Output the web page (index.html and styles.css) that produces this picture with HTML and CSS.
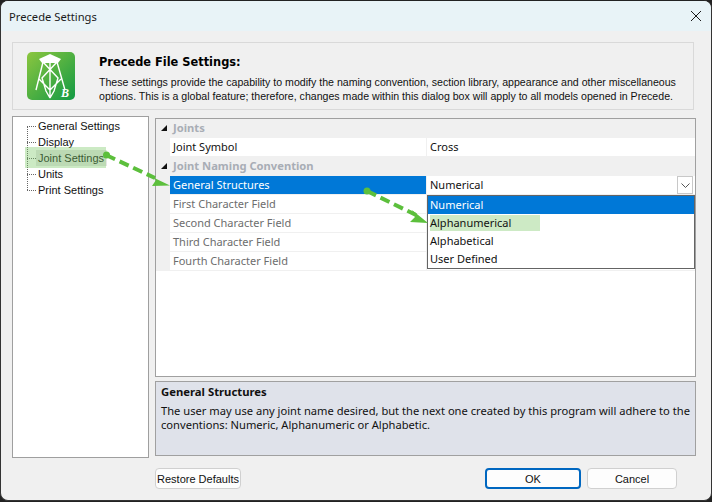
FILE: index.html
```html
<!DOCTYPE html>
<html lang="en">
<head>
<meta charset="utf-8">
<title>Precede Settings</title>
<link rel="stylesheet" href="styles.css">
</head>
<body>
<div class="window">
  <div class="titlebar">
    <span class="title">Precede Settings</span>
    <svg class="close" width="12" height="12" viewBox="0 0 12 12"><path d="M1 1L11 11M11 1L1 11" stroke="#1a1a1a" stroke-width="1" fill="none"/></svg>
  </div>
  <div class="content">
    <div class="header">
      <svg class="logo" width="48" height="48" viewBox="0 0 48 48">
        <defs><linearGradient id="lg" x1="0" y1="0" x2="1" y2="1"><stop offset="0" stop-color="#8cc63f"/><stop offset="1" stop-color="#129a44"/></linearGradient></defs>
        <rect width="48" height="48" rx="5" fill="url(#lg)"/>
        <path d="M12 7L23 2L34 7L31 11H15Z" fill="#fff"/>
        <path d="M16 10L9 38M30 10L38 38M23 10V46M16 10L31 26L27 39L23 46M30 10L15 26L19 39L23 46M12 27L23 38L34 27" stroke="#fff" stroke-width="1.4" fill="none"/>
        <text x="34" y="45" class="logo-b">B</text>
      </svg>
      <div class="header-text">
        <h1 class="heading">Precede File Settings:</h1>
        <p class="desc">These settings provide the capability to modify the naming convention, section library, appearance and other miscellaneous<br>options. This is a global feature; therefore, changes made within this dialog box will apply to all models opened in Precede.</p>
      </div>
    </div>
    <div class="main">
      <ul class="tree">
        <li class="tree-item"><span class="tree-label">General Settings</span></li>
        <li class="tree-item"><span class="tree-label">Display</span></li>
        <li class="tree-item is-selected"><span class="tree-label">Joint Settings</span></li>
        <li class="tree-item"><span class="tree-label">Units</span></li>
        <li class="tree-item"><span class="tree-label">Print Settings</span></li>
      </ul>
      <div class="side">
        <div class="grid">
          <div class="group"><span class="caret"></span>Joints</div>
          <div class="row"><div class="name">Joint Symbol</div><div class="value">Cross</div></div>
          <div class="group"><span class="caret"></span>Joint Naming Convention</div>
          <div class="row row-active"><div class="name">General Structures</div><div class="value">Numerical<span class="combo-btn"><svg width="9" height="5" viewBox="0 0 9 5"><path d="M0.5 0.5L4.5 4.5L8.5 0.5" stroke="#555" fill="none"/></svg></span></div></div>
          <div class="row row-off"><div class="name">First Character Field</div><div class="value"></div></div>
          <div class="row row-off"><div class="name">Second Character Field</div><div class="value"></div></div>
          <div class="row row-off"><div class="name">Third Character Field</div><div class="value"></div></div>
          <div class="row row-off"><div class="name">Fourth Character Field</div><div class="value"></div></div>
          <ul class="dropdown">
            <li class="opt opt-sel">Numerical</li>
            <li class="opt opt-marked"><span class="opt-mark">Alphanumerical</span></li>
            <li class="opt">Alphabetical</li>
            <li class="opt">User Defined</li>
          </ul>
        </div>
        <div class="help">
          <div class="help-title">General Structures</div>
          <p class="help-text">The user may use any joint name desired, but the next one created by this program will adhere to the<br>conventions: Numeric, Alphanumeric or Alphabetic.</p>
        </div>
      </div>
    </div>
    <div class="footer">
      <button class="btn btn-restore">Restore Defaults</button>
      <div class="footer-right">
        <button class="btn btn-ok">OK</button>
        <button class="btn btn-cancel">Cancel</button>
      </div>
    </div>
  </div>
  <svg class="arrows" width="712" height="502" viewBox="0 0 712 502">
    <circle cx="106.5" cy="155" r="3.5" fill="#5cbf3c"/>
    <path d="M106 155L155 178" stroke="#5cbf3c" stroke-width="4" stroke-dasharray="10 5" fill="none"/>
    <path d="M170 185.500L152 186L156 180L148 175Z" fill="#5cbf3c"/>
    <circle cx="367" cy="191" r="3.500" fill="#5cbf3c"/>
    <path d="M367 191L416 215" stroke="#5cbf3c" stroke-width="4" stroke-dasharray="10 5" fill="none"/>
    <path d="M428 223L410 222L415 217L412 210Z" fill="#5cbf3c"/>
  </svg>
</div>
</body>
</html>
```
FILE: styles.css
```css
* { box-sizing: border-box; }
html, body { margin: 0; padding: 0; }
body { width: 712px; height: 502px; background: #222; overflow: hidden; font-family: "Noto Sans", sans-serif; font-size: 11px; color: #111; }
.window { position: relative; width: 712px; height: 501px; background: #f0f0f0; border-radius: 8px; border: 1px solid #333; border-top-color: #222; overflow: hidden; }
.titlebar { height: 30px; background: #e8f3f7; display: flex; align-items: center; justify-content: space-between; padding: 0 9px 0 8px; }
.title { font-size: 11.2px; color: #1a1a1a; }
.content { padding: 11px 15px 0 11px; }
.header { height: 68px; margin-right: 2px; border: 1px solid #d9d9d9; display: flex; padding: 9px 0 0 14px; gap: 24px; }
.logo { flex: none; }
.logo-b { font: italic bold 12px "Liberation Serif", serif; fill: #fff; }
.heading { margin: 2px 0 5px; font: bold 11.4px/16px "DejaVu Sans", sans-serif; color: #000; }
.desc { margin: 0; font: 10.6px/14px "Liberation Sans", sans-serif; color: #111; white-space: nowrap; }
.main { display: flex; margin-top: 6px; gap: 6px; height: 342px; }
.tree { list-style: none; margin: 0; width: 137px; height: 342px; flex: none; background: #fff; border: 1px solid #9f9f9f; padding: 1px 0 0 14px; position: relative; font-family: "Liberation Sans", sans-serif; }
.tree-item { height: 16px; line-height: 16px; display: flex; align-items: center; position: relative; }
.tree-item::before { content: ""; width: 9px; border-top: 1px dotted #666; flex: none; }
.tree-label { padding-left: 2px; white-space: nowrap; }
.tree::before { content: ""; position: absolute; left: 14px; top: 9px; height: 64px; border-left: 1px dotted #666; }
.tree-item.is-selected::after { content: ""; position: absolute; left: -2px; top: -3px; width: 81px; height: 21px; background: rgba(120, 200, 100, 0.38); }
.tree-item.is-selected .tree-label { background: #e6e6e6; padding-right: 3px; }
.side { width: 541px; display: flex; flex-direction: column; gap: 4px; height: 340px; }
.grid { position: relative; height: 259px; background: #fff; border: 1px solid #a0a0a0; margin-top: 2px; }
.group { height: 19px; background: #f0f0f0; font-weight: 700; font-size: 11.2px; color: #a8adb5; line-height: 18px; padding-left: 17px; position: relative; }
.caret { position: absolute; left: 5px; top: 6px; width: 0; height: 0; border-left: 6px solid transparent; border-bottom: 6px solid #111; }
.row { display: grid; grid-template-columns: 257px 1fr; height: 19px; background: #f0f0f0; padding-left: 14px; }
.name { background: #fff; padding-left: 3px; line-height: 18px; height: 18px; margin-right: 1px; }
.value { background: #fff; padding-left: 3px; line-height: 18px; height: 18px; position: relative; }
.row-active .name { background: #0078d7; color: #fff; }
.row-off .name { color: #6d6d6d; }
.combo-btn { position: absolute; right: 2px; top: 0; width: 16px; height: 18px; border: 1px solid #c8c8c8; display: flex; align-items: center; justify-content: center; }
.dropdown { list-style: none; margin: 0; padding: 0; position: absolute; left: 271px; top: 76px; width: 268px; height: 74px; background: #fff; border: 1px solid #646464; }
.opt { height: 18px; line-height: 18px; padding-left: 2px; }
.opt-sel { background: #0078d7; color: #fff; }
.opt-marked { padding-top: 1px; }
.opt-mark { display: block; width: 110px; background: #cdeac5; height: 16px; line-height: 16px; }
.help { height: 75px; background: #dfe2ea; border: 1px solid #a0a0a0; padding: 2px 5px; }
.help-title { font-weight: 700; font-size: 11.3px; line-height: 15px; }
.help-text { margin: 5px 0 0; font-size: 11.15px; line-height: 14px; white-space: nowrap; }
.footer { display: flex; justify-content: space-between; padding: 10px 19px 0 143px; }
.footer-right { display: flex; gap: 6px; }
.btn { font: 11px "Liberation Sans", sans-serif; color: #111; background: #fdfdfd; border: 1px solid #d0d0d0; border-radius: 4px; height: 21px; padding: 0; white-space: nowrap; }
.btn-restore { width: 86px; }
.btn-ok { width: 96px; border: 2px solid #0067c0; }
.btn-cancel { width: 90px; }
.arrows { position: absolute; left: -1px; top: -1px; pointer-events: none; }
```
